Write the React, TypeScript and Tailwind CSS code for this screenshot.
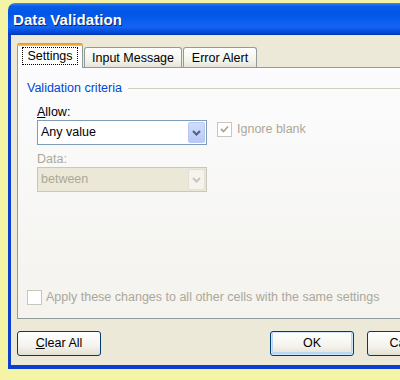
import React from "react";

const Chevron = ({ color }: { color: string }) => (
  <svg width="9" height="6" viewBox="0 0 9 6">
    <path d="M1 1 L4.5 4.5 L8 1" fill="none" stroke={color} strokeWidth="2" />
  </svg>
);

const Check = () => (
  <svg width="11" height="11" viewBox="0 0 11 11">
    <path d="M2 5 L4.5 7.5 L9 2.5" fill="none" stroke="#aca899" strokeWidth="1.8" />
  </svg>
);

export default function App() {
  return (
    <div
      className="w-[400px] h-[380px] bg-[#f5f3a6] overflow-hidden relative"
      style={{ fontFamily: '"Liberation Sans", Arial, sans-serif' }}
    >
      <div className="absolute left-[8px] top-[3px] w-[420px] h-[366px] flex flex-col">
        {/* Title bar */}
        <div className="h-[32px] rounded-tl-[7px] bg-[linear-gradient(to_bottom,#3d8bf7_0px,#0a5ee8_3px,#0055e5_10px,#0a5ef0_18px,#1563f3_24px,#0350de_28px,#003fc4_31px,#0033a8_32px)] flex items-center pl-[5px] pt-[2px]">
          <span className="text-white font-bold text-[15px] [text-shadow:1px_1px_0_#0a1e73] tracking-[0.1px]">
            Data Validation
          </span>
        </div>
        {/* Body */}
        <div className="flex-1 bg-[#ece9d8] border-l-[3px] border-b-[4px] border-[#0b3fcf] flex flex-col pl-[6px] pt-[8px]">
          {/* Tabs */}
          <div className="flex items-end h-[24px] text-[12.5px] text-black">
            <div className="relative z-10 h-[25px] -mb-[1px] w-[66px] shrink-0 bg-white border-l border-r border-[#919b9c] rounded-t-[3px] flex flex-col">
              <div className="h-[3px] bg-[linear-gradient(to_bottom,#e68b2c,#ffc73c)] rounded-t-[3px] -mx-[1px]" />
              <div className="flex-1 flex items-start justify-center pt-[1px]">
                <span className="border border-dotted border-black px-[4px] leading-[16px]">Settings</span>
              </div>
            </div>
            <div className="h-[20px] w-[98px] shrink-0 ml-[1px] border border-b-0 border-[#919b9c] rounded-t-[3px] bg-[linear-gradient(to_bottom,#ffffff,#f2f1ea_70%,#e6e4d8)] flex items-center justify-center pt-[1px]">
              Input Message
            </div>
            <div className="h-[20px] w-[74px] shrink-0 ml-[1px] border border-b-0 border-[#919b9c] rounded-t-[3px] bg-[linear-gradient(to_bottom,#ffffff,#f2f1ea_70%,#e6e4d8)] flex items-center justify-center pt-[1px]">
              Error Alert
            </div>
          </div>
          {/* Panel */}
          <div className="h-[252px] w-[420px] shrink-0 border border-[#919b9c] bg-[linear-gradient(to_bottom,#fcfcfe,#f4f3ee)] flex flex-col pl-[9px] pt-[12px] text-[12.5px]">
            <div className="flex items-center h-[16px]">
              <span className="text-[#0046d5]">Validation criteria</span>
              <div className="flex-1 h-px bg-[#d0d0bf] ml-[6px]" />
            </div>
            <div className="pl-[10px] mt-[8px] flex">
              <div className="flex flex-col w-[170px] shrink-0">
                <div className="h-[16px] leading-[16px] text-black">
                  <span className="underline">A</span>llow:
                </div>
                <div className="h-[25px] border border-[#7f9db9] bg-white flex items-center justify-between pl-[3px] pr-[1px]">
                  <span className="text-black">Any value</span>
                  <div className="w-[17px] h-[21px] rounded-[2px] border border-[#b9c9f3] bg-[linear-gradient(to_bottom,#cfdcfd,#b7cbf7)] flex items-center justify-center">
                    <Chevron color="#4d6185" />
                  </div>
                </div>
                <div className="h-[16px] leading-[16px] text-[#aca899] mt-[6px]">Data:</div>
                <div className="h-[25px] border border-[#c9c7ba] bg-[#ebe8d7] flex items-center justify-between pl-[3px] pr-[1px]">
                  <span className="text-[#aca899]">between</span>
                  <div className="w-[17px] h-[21px] rounded-[2px] border border-[#e3e1d7] bg-[#f4f3ee] flex items-center justify-center">
                    <Chevron color="#c9c7ba" />
                  </div>
                </div>
              </div>
              <div className="ml-[10px] mt-[18px] flex items-start">
                <div className="w-[15px] h-[15px] border border-[#c9c7ba] bg-white flex items-center justify-center">
                  <Check />
                </div>
                <span className="ml-[5px] text-[#aca899] leading-[15px]">Ignore blank</span>
              </div>
            </div>
            <div className="flex-1" />
            <div className="flex items-center mb-[11px]">
              <div className="w-[15px] h-[15px] shrink-0 border border-[#c9c7ba] bg-white" />
              <span className="ml-[4px] text-[#aca899] whitespace-nowrap">
                Apply these changes to all other cells with the same settings
              </span>
            </div>
          </div>
          {/* Buttons */}
          <div className="flex mt-[12px] text-[12.5px] text-black">
            <div className="w-[84px] h-[25px] shrink-0 rounded-[3px] border border-[#003c74] bg-[linear-gradient(to_bottom,#ffffff,#f4f3ee_60%,#e3e0d2)] flex items-center justify-center">
              <span>
                <span className="underline">C</span>lear All
              </span>
            </div>
            <div className="w-[84px] h-[25px] shrink-0 ml-[169px] rounded-[3px] border border-[#003c74] bg-[linear-gradient(to_bottom,#ffffff,#f4f3ee_60%,#e3e0d2)] shadow-[inset_0_0_0_1px_#cee7ff,inset_0_-1px_0_2px_#bcd4f6] flex items-center justify-center">
              OK
            </div>
            <div className="w-[84px] h-[25px] shrink-0 ml-[13px] rounded-[3px] border border-[#003c74] bg-[linear-gradient(to_bottom,#ffffff,#f4f3ee_60%,#e3e0d2)] flex items-center justify-center">
              Cancel
            </div>
          </div>
        </div>
      </div>
    </div>
  );
}
